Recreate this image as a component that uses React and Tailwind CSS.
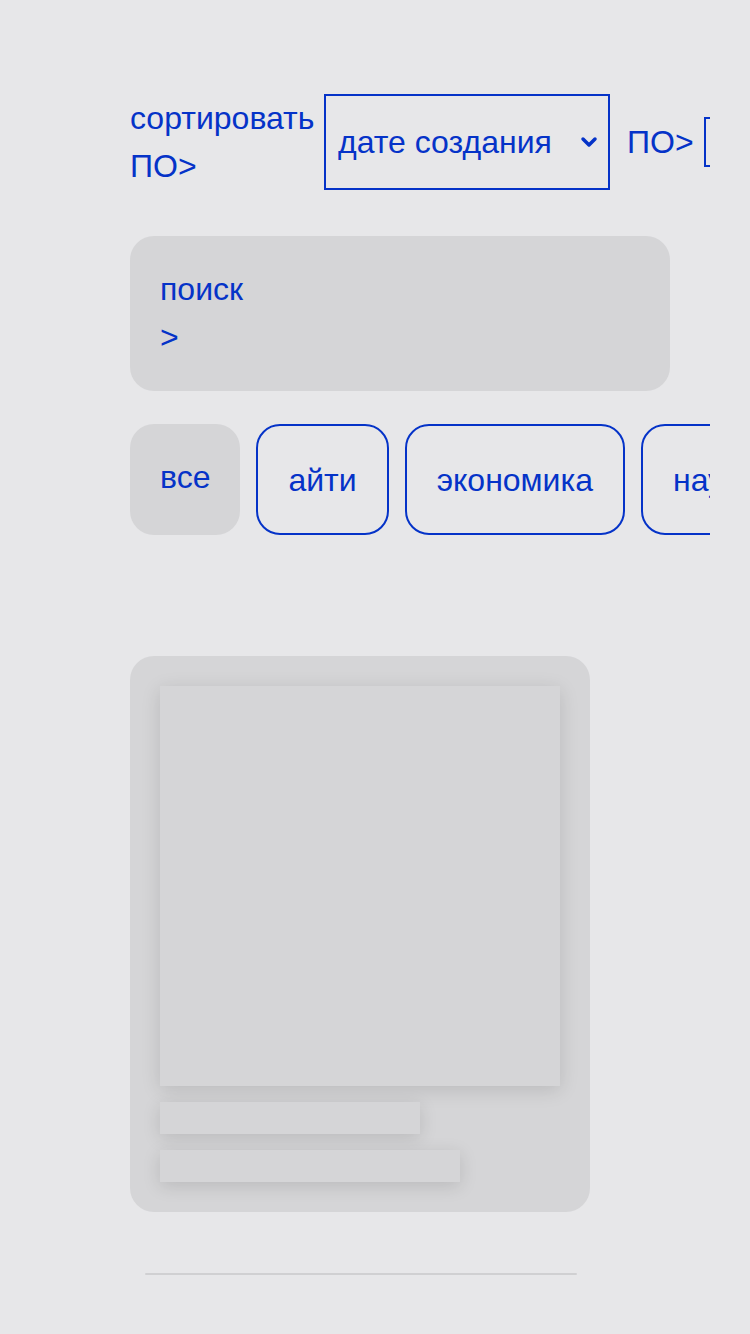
import React from 'react';

const Chevron = () => (
  <svg width="18" height="12" viewBox="0 0 18 12" fill="none" stroke="currentColor" strokeWidth="3.5" strokeLinecap="round" strokeLinejoin="round">
    <path d="M3 3l6 6 6-6" />
  </svg>
);

const categories = ['айти', 'экономика', 'наука'];

const App = () => {
  return (
    <div className="min-h-screen bg-[#e7e7e9] font-['Liberation_Sans',Arial,sans-serif] text-[#0533c8]">
      <div className="ml-[130px] w-[580px] pt-[94px] pb-[60px]">
        {/* Sort row */}
        <div className="flex items-center overflow-hidden">
          <div className="w-[184px] shrink-0 text-[32px] leading-[48px]">
            сортировать<br />ПО&gt;
          </div>
          <div className="ml-[10px] flex h-[96px] w-[286px] shrink-0 items-center justify-between border-2 border-[#0533c8] pl-[12px] pr-[10px]">
            <span className="text-[32px] leading-[48px]">дате создания</span>
            <Chevron />
          </div>
          <div className="ml-[17px] shrink-0 text-[32px] leading-[48px]">ПО&gt;</div>
          <div className="ml-[10px] h-[50px] w-[200px] shrink-0 border-2 border-[#0533c8]"></div>
        </div>

        {/* Search */}
        <div className="mt-[46px] h-[155px] w-[540px] rounded-[24px] bg-[#d5d5d7] px-[30px] pt-[29px] text-[32px] leading-[48px]">
          <div>поиск</div>
          <div>&gt;</div>
        </div>

        {/* Categories */}
        <div className="mt-[33px] flex gap-4 overflow-hidden">
          <div className="h-[111px] shrink-0 rounded-[24px] bg-[#d5d5d7] px-[30px] pt-[29px] text-[32px] leading-[48px]">
            все
          </div>
          {categories.map((c) => (
            <div
              key={c}
              className="flex h-[111px] shrink-0 items-center rounded-[24px] border-2 border-[#0533c8] px-[30px] text-[32px] leading-[48px]"
            >
              {c}
            </div>
          ))}
        </div>

        {/* Skeleton card */}
        <div className="mt-[121px] w-[460px] rounded-[24px] bg-[#d5d5d7] p-[30px]">
          <div className="h-[400px] w-[400px] bg-[#d5d5d7] shadow-[0_4px_18px_rgba(0,0,0,0.13)]"></div>
          <div className="mt-4 h-8 w-[260px] bg-[#d5d5d7] shadow-[0_4px_18px_rgba(0,0,0,0.13)]"></div>
          <div className="mt-4 h-8 w-[300px] bg-[#d5d5d7] shadow-[0_4px_18px_rgba(0,0,0,0.13)]"></div>
        </div>

        {/* Next card edge */}
        <div className="ml-[15px] mt-[61px] h-[2px] w-[432px] rounded-full bg-[#d0d0d2]"></div>
      </div>
    </div>
  );
};

export default App;
